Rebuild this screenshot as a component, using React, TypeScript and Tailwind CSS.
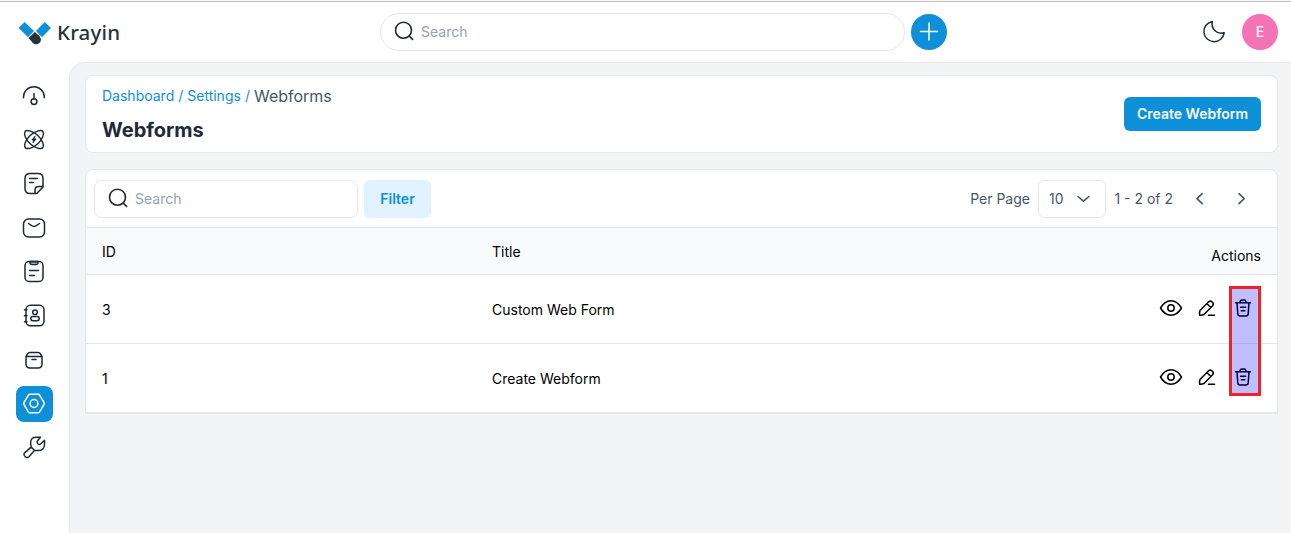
import type { ReactNode } from "react";

function Icon({ children, size = 24, sw = 1.5, className = "" }: { children: ReactNode; size?: number; sw?: number; className?: string }) {
  return (
    <svg width={size} height={size} viewBox="0 0 24 24" fill="none" stroke="currentColor" strokeWidth={sw} strokeLinecap="round" strokeLinejoin="round" className={`shrink-0 ${className}`}>
      {children}
    </svg>
  );
}

const Gauge = () => (
  <Icon>
    <path d="M1.500 13.800v-1a10.400 10 0 0 1 20.800 0v1M12 9.700v5.300" />
    <circle cx="12" cy="17.600" r="2.900" />
  </Icon>
);
const Leads = () => (
  <Icon sw={1.4}>
    <path d="M7.900 15.600C3.700 11.400 1.600 6.200 3 3.700S11.600 3.200 15.900 7.500 22.400 16.900 21 19.400 12.200 19.900 7.900 15.600z" />
    <path d="M16.100 15.600C20.300 11.400 22.400 6.200 21 3.700S12.400 3.200 8.100 7.500 1.600 16.900 3 19.400 11.800 19.900 16.100 15.600z" />
    <path d="M13 8.200l-3.100 3.800h1.600l-.5 2.800 3.200-3.900h-1.700z" fill="currentColor" strokeWidth=".8" />
  </Icon>
);
const Quote = () => (
  <Icon>
    <path d="M13 21.500H8q-5 0-5-5v-10q0-5 5-5h8q5 0 5 5V15l-6.200 6.500H13V18q0-3.500 3.500-3.500H21M7.500 6.500h8M7.500 10.500h3.800" />
  </Icon>
);
const Mail = () => (
  <Icon>
    <rect x="1.500" y="3" width="21" height="18" rx="5" />
    <path d="M6.500 7.500l3.200 2.200q2.300 1.400 4.600 0l3.200-2.200" />
  </Icon>
);
const Clip = () => (
  <Icon>
    <rect x="3" y="1.500" width="18" height="20" rx="4" />
    <path d="M8 1.500v1q0 2 2 2h4q2 0 2-2v-1zM7.500 10.500h9M7.500 15.500h5" />
    <path d="M9 2.500h6" strokeWidth="2" opacity=".5" />
  </Icon>
);
const Contact = () => (
  <Icon>
    <rect x="4" y="1.200" width="18" height="20.500" rx="4.500" />
    <circle cx="13" cy="8.200" r="2.300" />
    <rect x="8.800" y="12.500" width="8.400" height="4.200" rx="2.100" />
    <path d="M2.500 5.700H5M2.500 11.700H5M2.500 17.700H5" />
  </Icon>
);
const Product = () => (
  <Icon>
    <path d="M4 8.500h16M10 11.500h4M4 8.500V16q0 4 4 4h8q4 0 4-4V8.500L18.500 6Q17.800 4.500 16 4.500H8Q6.200 4.500 5.500 6z" />
  </Icon>
);
const Gear = () => (
  <Icon>
    <path d="M8.200 2.200h7.600q1.200 0 1.800 1L22 10.500q.6 1 0 2l-4.400 7.300q-.6 1-1.800 1H8.200q-1.200 0-1.800-1L2 12.500q-.6-1 0-2l4.400-7.300q.6-1 1.800-1z" />
    <circle cx="12" cy="11.500" r="3.900" />
  </Icon>
);
const Wrench = () => (
  <Icon sw={1.500}>
    <path d="M2.200 19.300q-.7-1.300.4-2.400l6.500-5.800-.5-4.300Q8.700 1.100 14.500 1.300h4l-3 3.400q-1 1.200.1 2.600l.5.700q1.200 1 2.500 0L22.500 4.300v4.500q-.4 5.500-5.700 5.700l-4.200-.3L7 20.800q-1.300 1.300-2.800.5T2.200 19.300zM9.200 11.100l3.200 3.200" />
  </Icon>
);
const Search = () => (
  <Icon sw={1.6}>
    <circle cx="11.500" cy="10.200" r="8" />
    <path d="M17.300 16.200l3.300 3.200" />
  </Icon>
);
const Eye = () => (
  <Icon>
    <path d="M1.500 12q4.200-7.200 10.500-7.200T22.500 12q-4.200 7.200-10.500 7.200T1.500 12z" />
    <circle cx="12" cy="12" r="3.200" />
  </Icon>
);
const Pen = () => (
  <Icon>
    <path d="M4.700 19.200q-.5-2.500.3-4.600L13.600 5.800q1.700-1.400 3.600.2t.4 3.800L9 18.500q-2 .9-4.300.7zM12 7.800l3.900 3.700M13.500 19.200h6" />
  </Icon>
);
const Trash = () => (
  <Icon>
    <path d="M4.500 6.700h15M9 6.400q.2-2.300 2-2.300h2q1.800 0 2 2.300M6 6.700l.8 11.200q.2 2.100 2.200 2.100h6q2 0 2.200-2.100L18 6.700M9.600 11.300h5M10.300 14.800h3.500" />
  </Icon>
);

const nav = [Gauge, Leads, Quote, Mail, Clip, Contact, Product, Gear, Wrench];
const rows = [
  { id: 3, title: "Custom Web Form" },
  { id: 1, title: "Create Webform" },
];

export default function App() {
  return (
    <div className="flex h-[533px] w-[1291px] flex-col overflow-hidden bg-white font-['Inter',sans-serif] text-sm text-[#1f2937]">
      <header className="flex h-[62px] shrink-0 items-center border-t border-[#fafafa]">
        <div className="flex h-full w-full items-center border-t border-[#bdbdbd]">
          <div className="flex w-[380px] items-center pl-[18px]">
            <svg width="34" height="26" viewBox="0 -1 34 26">
              <path d="M.6 7.700L6.700 2 16 11l-6 6.300z" fill="#0e90d9" />
              <path d="M33 8L26.700 2 18 11l6 6.300z" fill="#0e90d9" />
              <path d="M17 12.100l4.700 4.300q2.600 3.600-.2 6.500-3.600 2.700-6.600.1l-4.500-5.100z" fill="#263238" />
            </svg>
            <span className="ml-[5px] font-['Noto_Sans',sans-serif] text-[20.5px] leading-6 font-medium tracking-[0.2px] text-[#263238]">Krayin</span>
          </div>
          <div className="flex h-[38px] w-[525px] items-center rounded-full border border-gray-200 pl-[11px] text-gray-400">
            <span className="text-[#1f2937]"><Search /></span>
            <span className="ml-[5px]">Search</span>
          </div>
          <button className="ml-1.5 flex size-9 items-center justify-center rounded-full bg-[#0e90d9] text-white">
            <Icon><path d="M3.500 11.500h17M12 3v17" /></Icon>
          </button>
          <div className="ml-auto flex items-center gap-4 pr-[13px]">
            <Icon><path d="M10.300 1.400A10.200 10.200 0 1 0 22.200 12.800q-5.300 1.600-9.200-2.100T10.300 1.400z" /></Icon>
            <div className="flex size-9 items-center justify-center rounded-full bg-[#f472b6] text-sm font-medium text-white">E</div>
          </div>
        </div>
      </header>

      <div className="flex min-h-0 flex-1">
        <nav className="flex w-[69px] shrink-0 flex-col items-center gap-2 pt-4">
          {nav.map((Glyph, i) => (
            <a key={i} className={`flex h-9 w-[37px] items-center justify-center rounded-lg pr-px ${i === 7 ? "bg-[#0e90d9] text-white" : "text-[#1f2937]"}`}>
              <Glyph />
            </a>
          ))}
        </nav>

        <main className="flex min-w-0 flex-1 flex-col gap-4 rounded-tl-2xl border-t border-l border-gray-200 bg-gray-100 pt-3 pr-[13px] pl-[15px]">
          <section className="flex h-[78px] shrink-0 items-center justify-between rounded-lg border border-gray-200 bg-white px-4">
            <div className="flex flex-col gap-2">
              <div className="flex h-6 items-center gap-1 text-[#0e90d9]">
                <span>Dashboard</span><span>/</span><span>Settings</span><span>/</span>
                <span className="text-base text-gray-600">Webforms</span>
              </div>
              <h1 className="text-xl font-bold">Webforms</h1>
            </div>
            <button className="h-[34px] w-[137px] rounded-md bg-[#0e90d9] font-semibold text-gray-50">Create Webform</button>
          </section>

          <section className="relative flex h-[245px] shrink-0 flex-col rounded-t-lg border border-gray-200 bg-white">
            <div className="flex h-[57px] shrink-0 items-center pl-2 text-gray-600">
              <div className="flex h-[38px] w-[264px] items-center rounded-lg border border-gray-200 pl-[11px] text-gray-400">
                <span className="text-[#1f2937]"><Search /></span>
                <span className="ml-[5px]">Search</span>
              </div>
              <button className="ml-1.5 h-[38px] w-[67px] rounded-md bg-sky-100 font-semibold text-[#0e90d9]">Filter</button>
              <span className="ml-auto">Per Page</span>
              <div className="ml-2 flex h-[38px] w-[68px] items-center justify-between rounded-md border border-gray-200 pr-[9px] pl-2.5">
                <span>10</span>
                <Icon sw={1.6}><path d="M6 9.500l5.500 4.700L17 9.500" /></Icon>
              </div>
              <span className="ml-[8.5px]">1 - 2 of 2</span>
              <Icon className="ml-[15px]" sw={1.6}><path d="M14.200 6.700L9 11.700l5.200 5" /></Icon>
              <Icon className="mr-[23px] ml-[18px]" sw={1.6}><path d="M9 6.700l5.200 5-5.200 5" /></Icon>
            </div>
            <div className="grid h-12 shrink-0 grid-cols-[390px_390px_1fr] items-center border-y border-gray-200 bg-gray-50 px-4 pt-0.5 text-black">
              <span>ID</span>
              <span>Title</span>
              <span className="pt-2 text-right">Actions</span>
            </div>
            {rows.map((row) => (
              <div key={row.id} className="grid h-[69px] shrink-0 grid-cols-[390px_390px_1fr] items-center border-b border-gray-200 px-4 pt-0.5 text-black">
                <span>{row.id}</span>
                <span>{row.title}</span>
                <span className="flex items-center justify-end gap-3 pr-1.5 pb-1">
                  <Eye /><Pen /><Trash />
                </span>
              </div>
            ))}
            <div className="absolute top-[115.5px] right-[16px] h-[110px] w-[32px] border-3 border-[#ee2328] bg-[#0000ff40]" />
          </section>
        </main>
      </div>
    </div>
  );
}
